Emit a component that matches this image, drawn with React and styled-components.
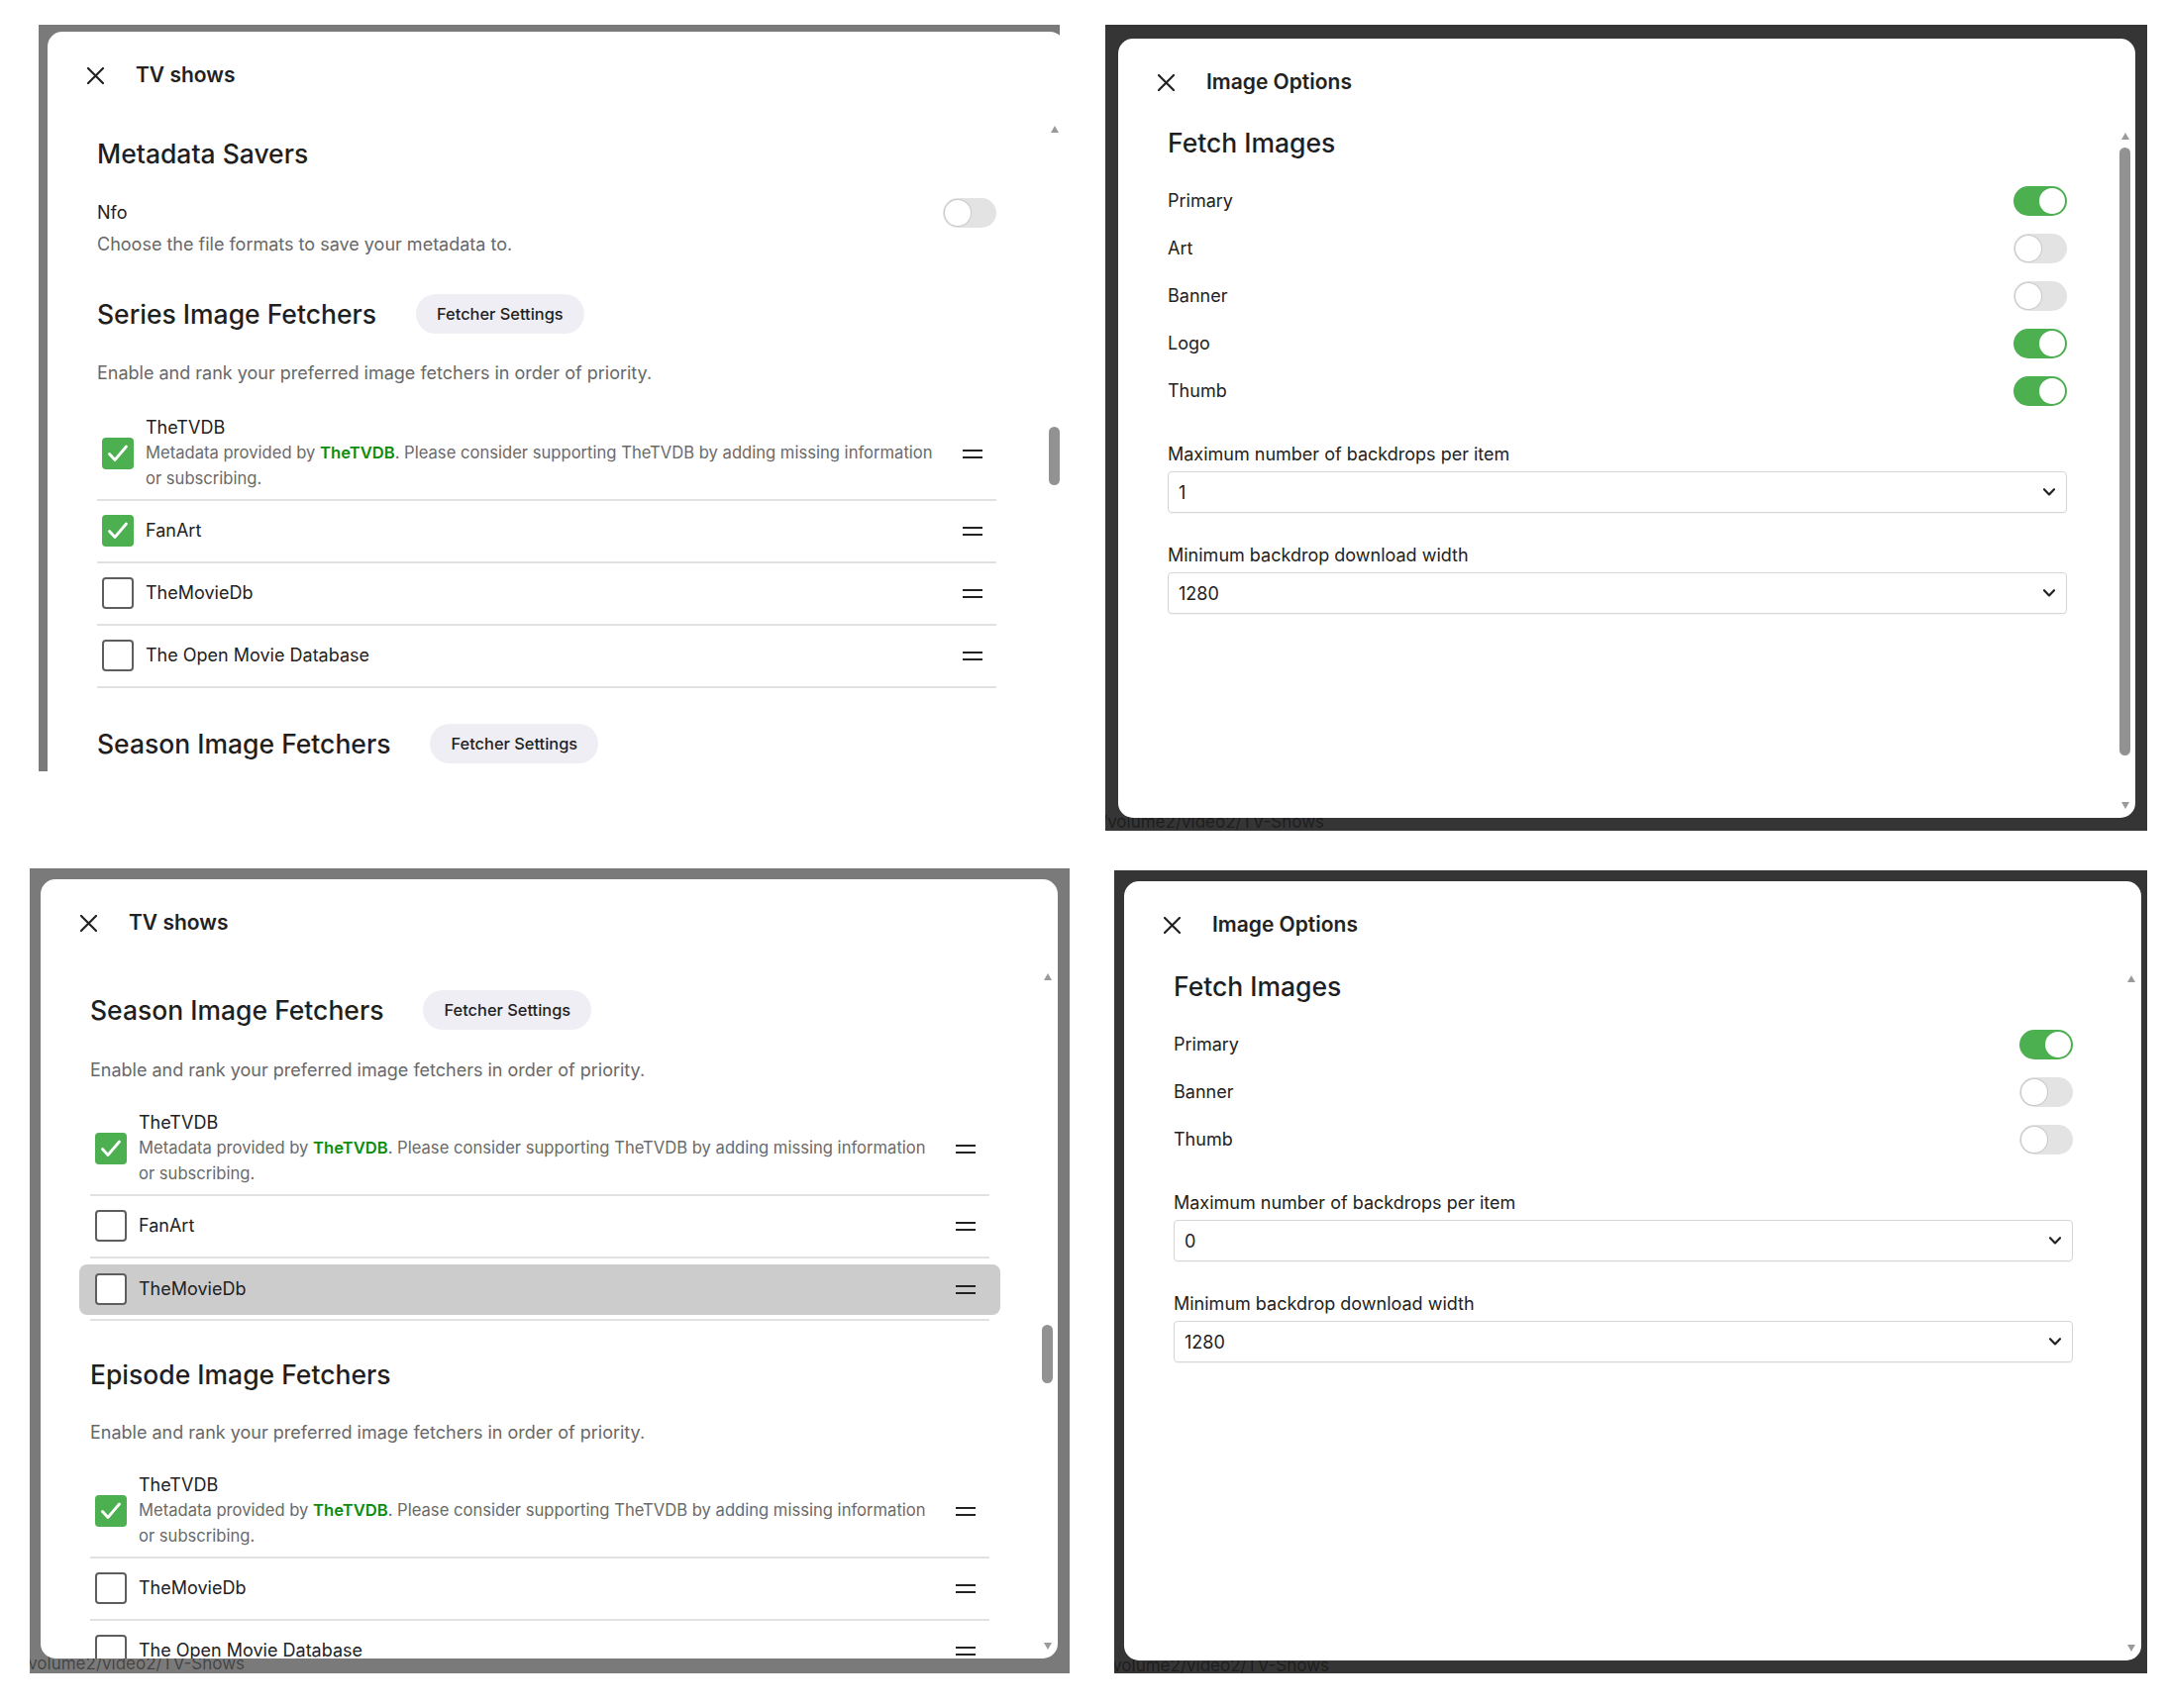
import React from 'react';
import styled, { createGlobalStyle } from 'styled-components';

const GlobalStyle = createGlobalStyle`
  html, body { margin: 0; padding: 0; background: #fff; }
  body {
    font-family: Inter, "Noto Sans", sans-serif;
    color: #222;
    -webkit-font-smoothing: antialiased;
  }
  * { box-sizing: border-box; }
`;

const Page = styled.div`
  width: 2188px;
  height: 1725px;
  display: grid;
  grid-template-columns: 1090px 1098px;
  grid-template-rows: 860px 865px;
  overflow: hidden;
`;

const Frame = styled.div`
  position: relative;
  margin: ${p => p.$mt}px 0 0 ${p => p.$ml}px;
  width: ${p => p.$w}px;
  height: ${p => p.$h}px;
  padding: ${p => p.$pad};
  background: ${p => p.$bg};
  overflow: hidden;
`;

const PathText = styled.span`
  position: absolute;
  left: ${p => p.$left}px;
  top: ${p => p.$top}px;
  font-size: 17px;
  line-height: 22px;
  color: rgba(0, 0, 0, 0.45);
  white-space: nowrap;
`;

const Card = styled.div`
  position: relative;
  z-index: 1;
  width: 1027px;
  height: 787px;
  background: #fff;
  border-radius: 15px;
  display: flex;
  flex-direction: column;
  overflow: hidden;
`;

const Header = styled.div`
  height: 86px;
  flex-shrink: 0;
  display: flex;
  align-items: center;
  padding: 2px 0 0 40px;
`;

const Title = styled.h1`
  margin: 0 0 0 32px;
  font-size: 21px;
  font-weight: 600;
  line-height: 28px;
  color: #222;
`;

const Body = styled.div`
  flex: 1;
  min-height: 0;
  display: flex;
  padding: 0 5px 0 50px;
`;

const Content = styled.div`
  width: 908px;
  flex-shrink: 0;
  padding-top: ${p => p.$top}px;
`;

const ScrollCol = styled.div`
  margin-left: auto;
  width: 11px;
  display: flex;
  flex-direction: column;
  align-items: center;
  padding: 9px 0;
`;

const ArrowUp = styled.span`
  width: 0;
  height: 0;
  border-left: 4.5px solid transparent;
  border-right: 4.5px solid transparent;
  border-bottom: 7px solid #9a9a9a;
`;

const ArrowDown = styled.span`
  margin-top: auto;
  width: 0;
  height: 0;
  border-left: 4.5px solid transparent;
  border-right: 4.5px solid transparent;
  border-top: 7px solid #9a9a9a;
`;

const Thumb = styled.span`
  width: 11px;
  border-radius: 6px;
  background: #929292;
`;

const Heading = styled.h2`
  margin: ${p => p.$mt || 0}px 0 0;
  font-size: 26.5px;
  font-weight: 500;
  line-height: 34px;
  color: #1f1f1f;
`;

const SectionHead = styled.div`
  display: flex;
  align-items: center;
  gap: 40px;
  height: 40px;
  margin-top: ${p => p.$mt || 0}px;

  ${Heading} { margin: 0; }
`;

const FetcherButton = styled.button`
  height: 40px;
  padding: 0 21px;
  border: none;
  border-radius: 20px;
  background: #efeef5;
  font-family: inherit;
  font-size: 16.4px;
  font-weight: 500;
  color: #1f1f1f;
  cursor: pointer;
`;

const Desc = styled.p`
  margin: ${p => p.$mt || 0}px 0 0;
  font-size: 18px;
  line-height: 26px;
  color: #686868;
`;

const ToggleList = styled.div`
  display: flex;
  flex-direction: column;
  gap: 18px;
  margin-top: ${p => p.$mt || 0}px;
`;

const ToggleRow = styled.div`
  display: flex;
  align-items: center;
  justify-content: space-between;
  height: 30px;
  margin-top: ${p => p.$mt || 0}px;
`;

const Label = styled.span`
  font-size: 18px;
  line-height: 24px;
  color: #222;
`;

const Track = styled.span`
  position: relative;
  width: 54px;
  height: 30px;
  border-radius: 15px;
  background: ${p => (p.$on ? '#4caf50' : '#e3e3e3')};
  flex-shrink: 0;
`;

const Knob = styled.span`
  position: absolute;
  top: 2px;
  left: ${p => (p.$on ? '26px' : '2px')};
  width: 26px;
  height: 26px;
  border-radius: 50%;
  background: #fff;
  box-shadow: ${p => (p.$on ? 'none' : '0 0 0 1px #c9c9c9')};
`;

const Toggle = ({ on }) => (
  <Track $on={on}>
    <Knob $on={on} />
  </Track>
);

const List = styled.div`
  margin-top: ${p => p.$mt || 0}px;
`;

const Row = styled.div`
  padding: ${p => (p.$dragging ? '6px 0 4px' : p.$tall ? '10px 0 8px' : '14px 0 15px')};
  border-bottom: 2px solid #e1e1e1;
`;

const RowInner = styled.div`
  display: flex;
  align-items: center;
  padding: ${p => (p.$dragging ? '9px 11px 10px 16px' : '0 0 0 5px')};
  margin: ${p => (p.$dragging ? '0 -11px' : '0')};
  background: ${p => (p.$dragging ? '#cccccc' : 'transparent')};
  border-radius: 8px;
`;

const Box = styled.span`
  width: 32px;
  height: 32px;
  flex-shrink: 0;
  border-radius: 4px;
  margin-right: 12px;
  display: flex;
  align-items: center;
  justify-content: center;
  background: ${p => (p.$checked ? '#4caf50' : '#fff')};
  border: ${p => (p.$checked ? 'none' : '2px solid #5e5e5e')};
`;

const RowText = styled.div`
  flex: 1;
  min-width: 0;
  padding-right: 24px;
`;

const Name = styled.div`
  font-size: 18px;
  line-height: 24px;
  color: #222;
`;

const RowDesc = styled.div`
  font-size: 16.6px;
  line-height: 26px;
  color: #6a6a6a;
`;

const Link = styled.b`
  color: #0b8c0b;
  font-weight: 600;
`;

const Handle = styled.span`
  width: 20px;
  height: 9px;
  margin-right: 14px;
  flex-shrink: 0;
  border-top: 2.5px solid #222;
  border-bottom: 2.5px solid #222;
`;

const Field = styled.div`
  margin-top: ${p => p.$mt}px;
`;

const Select = styled.div`
  margin-top: 5px;
  height: 42px;
  display: flex;
  align-items: center;
  justify-content: space-between;
  padding: 0 11px 0 10px;
  border: 1.5px solid #d6d6d6;
  border-radius: 4px;
  box-shadow: 0 1px 1px rgba(0, 0, 0, 0.04);
  font-size: 18px;
  color: #222;
`;

const CloseIcon = () => (
  <svg width="17" height="17" viewBox="0 0 17 17">
    <path d="M1 1 L16 16 M16 1 L1 16" stroke="#222" strokeWidth="2.2" strokeLinecap="round" fill="none" />
  </svg>
);

const Check = () => (
  <svg width="24" height="22" viewBox="0 0 24 22">
    <path d="M3.5 11.5 L9 17.5 L20.5 4" stroke="#fff" strokeWidth="2.8" fill="none" strokeLinecap="round" strokeLinejoin="round" />
  </svg>
);

const Chevron = () => (
  <svg width="12" height="8" viewBox="0 0 12 8">
    <path d="M1 1.2 L6 6.4 L11 1.2" stroke="#222" strokeWidth="2.2" fill="none" strokeLinecap="round" strokeLinejoin="round" />
  </svg>
);

const tvdbDesc = (
  <>
    Metadata provided by <Link>TheTVDB</Link>. Please consider supporting TheTVDB by adding missing information or
    subscribing.
  </>
);

const Fetcher = ({ name, checked, desc, dragging }) => (
  <Row $tall={!!desc} $dragging={dragging}>
    <RowInner $dragging={dragging}>
      <Box $checked={checked}>{checked && <Check />}</Box>
      <RowText>
        <Name>{name}</Name>
        {desc && <RowDesc>{desc}</RowDesc>}
      </RowText>
      <Handle />
    </RowInner>
  </Row>
);

const SelectField = ({ label, value, mt }) => (
  <Field $mt={mt}>
    <Label>{label}</Label>
    <Select>
      <span>{value}</span>
      <Chevron />
    </Select>
  </Field>
);

const Dialog = ({ frame, title, top, thumb, path, children }) => (
  <Frame {...frame}>
    <Card>
      <Header>
        <CloseIcon />
        <Title>{title}</Title>
      </Header>
      <Body>
        <Content $top={top}>{children}</Content>
        <ScrollCol>
          <ArrowUp />
          {thumb && <Thumb style={{ marginTop: thumb.top, height: thumb.height }} />}
          <ArrowDown />
        </ScrollCol>
      </Body>
    </Card>
    {path && <PathText $left={path.left} $top={path.top}>/volume2/video2/TV-Shows</PathText>}
  </Frame>
);

const App = () => (
  <>
    <GlobalStyle />
    <Page>
      <Dialog
        frame={{ $mt: 25, $ml: 39, $w: 1031, $h: 754, $pad: '7px 0 0 9px', $bg: '#7a7a7a' }}
        title="TV shows"
        top={20}
        thumb={{ top: 297, height: 59 }}
      >
        <Heading>Metadata Savers</Heading>
        <ToggleRow $mt={28}>
          <Label>Nfo</Label>
          <Toggle on={false} />
        </ToggleRow>
        <Desc $mt={4}>Choose the file formats to save your metadata to.</Desc>
        <SectionHead $mt={37}>
          <Heading>Series Image Fetchers</Heading>
          <FetcherButton>Fetcher Settings</FetcherButton>
        </SectionHead>
        <Desc $mt={27}>Enable and rank your preferred image fetchers in order of priority.</Desc>
        <List $mt={20}>
          <Fetcher name="TheTVDB" checked desc={tvdbDesc} />
          <Fetcher name="FanArt" checked />
          <Fetcher name="TheMovieDb" />
          <Fetcher name="The Open Movie Database" />
        </List>
        <SectionHead $mt={36}>
          <Heading>Season Image Fetchers</Heading>
          <FetcherButton>Fetcher Settings</FetcherButton>
        </SectionHead>
      </Dialog>

      <Dialog
        frame={{ $mt: 25, $ml: 26, $w: 1052, $h: 814, $pad: '14px 0 0 13px', $bg: '#353535' }}
        title="Image Options"
        top={2}
        thumb={{ top: 8, height: 614 }}
        path={{ left: -4, top: 794 }}
      >
        <Heading>Fetch Images</Heading>
        <ToggleList $mt={27}>
          <ToggleRow><Label>Primary</Label><Toggle on /></ToggleRow>
          <ToggleRow><Label>Art</Label><Toggle on={false} /></ToggleRow>
          <ToggleRow><Label>Banner</Label><Toggle on={false} /></ToggleRow>
          <ToggleRow><Label>Logo</Label><Toggle on /></ToggleRow>
          <ToggleRow><Label>Thumb</Label><Toggle on /></ToggleRow>
        </ToggleList>
        <SelectField mt={37} label="Maximum number of backdrops per item" value="1" />
        <SelectField mt={31} label="Minimum backdrop download width" value="1280" />
      </Dialog>

      <Dialog
        frame={{ $mt: 17, $ml: 30, $w: 1050, $h: 813, $pad: '11px 0 0 11px', $bg: '#7a7a7a' }}
        title="TV shows"
        top={26}
        thumb={{ top: 348, height: 59 }}
        path={{ left: -8, top: 792 }}
      >
        <SectionHead>
          <Heading>Season Image Fetchers</Heading>
          <FetcherButton>Fetcher Settings</FetcherButton>
        </SectionHead>
        <Desc $mt={28}>Enable and rank your preferred image fetchers in order of priority.</Desc>
        <List $mt={18}>
          <Fetcher name="TheTVDB" checked desc={tvdbDesc} />
          <Fetcher name="FanArt" />
          <Fetcher name="TheMovieDb" dragging />
        </List>
        <SectionHead $mt={34}>
          <Heading>Episode Image Fetchers</Heading>
        </SectionHead>
        <Desc $mt={26}>Enable and rank your preferred image fetchers in order of priority.</Desc>
        <List $mt={18}>
          <Fetcher name="TheTVDB" checked desc={tvdbDesc} />
          <Fetcher name="TheMovieDb" />
          <Fetcher name="The Open Movie Database" />
        </List>
      </Dialog>

      <Dialog
        frame={{ $mt: 19, $ml: 35, $w: 1043, $h: 811, $pad: '11px 0 0 10px', $bg: '#353535' }}
        title="Image Options"
        top={3}
        path={{ left: -8, top: 792 }}
      >
        <Heading>Fetch Images</Heading>
        <ToggleList $mt={27}>
          <ToggleRow><Label>Primary</Label><Toggle on /></ToggleRow>
          <ToggleRow><Label>Banner</Label><Toggle on={false} /></ToggleRow>
          <ToggleRow><Label>Thumb</Label><Toggle on={false} /></ToggleRow>
        </ToggleList>
        <SelectField mt={37} label="Maximum number of backdrops per item" value="0" />
        <SelectField mt={31} label="Minimum backdrop download width" value="1280" />
      </Dialog>
    </Page>
  </>
);

export default App;
